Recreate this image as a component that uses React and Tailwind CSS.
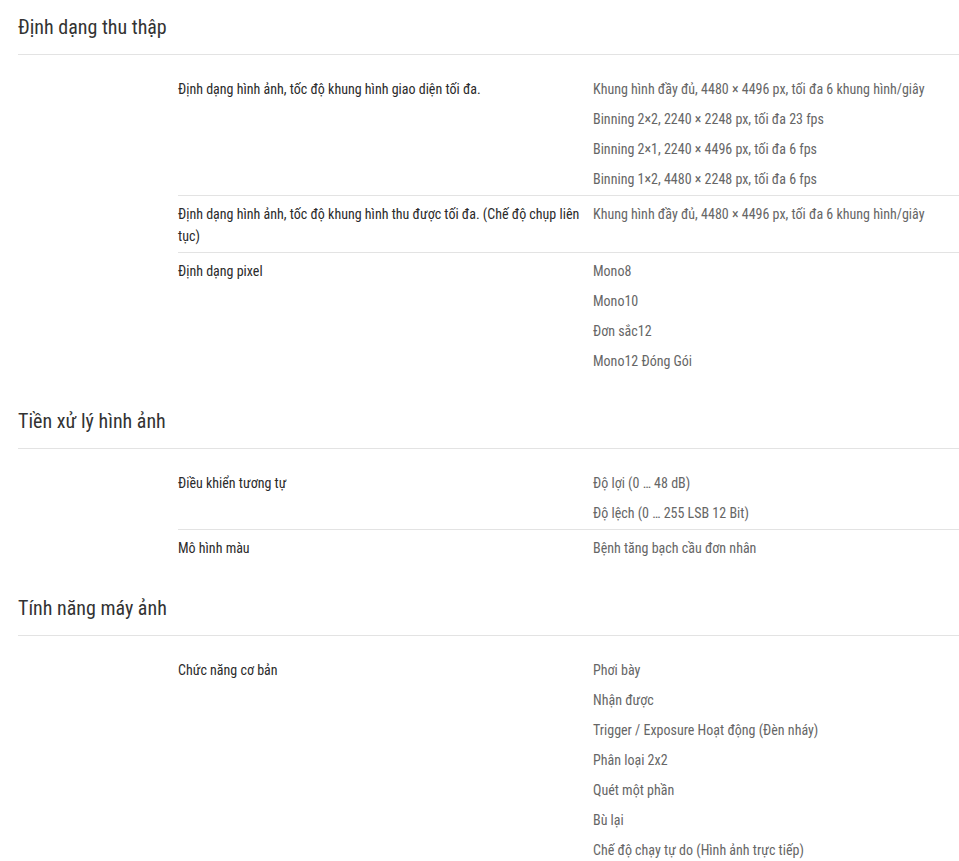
const sections = [
  {
    title: 'Định dạng thu thập',
    rows: [
      {
        label: 'Định dạng hình ảnh, tốc độ khung hình giao diện tối đa.',
        values: [
          'Khung hình đầy đủ, 4480 × 4496 px, tối đa 6 khung hình/giây',
          'Binning 2×2, 2240 × 2248 px, tối đa 23 fps',
          'Binning 2×1, 2240 × 4496 px, tối đa 6 fps',
          'Binning 1×2, 4480 × 2248 px, tối đa 6 fps',
        ],
      },
      {
        label: 'Định dạng hình ảnh, tốc độ khung hình thu được tối đa. (Chế độ chụp liên tục)',
        values: ['Khung hình đầy đủ, 4480 × 4496 px, tối đa 6 khung hình/giây'],
      },
      {
        label: 'Định dạng pixel',
        values: ['Mono8', 'Mono10', 'Đơn sắc12', 'Mono12 Đóng Gói'],
      },
    ],
  },
  {
    title: 'Tiền xử lý hình ảnh',
    rows: [
      {
        label: 'Điều khiển tương tự',
        values: ['Độ lợi (0 … 48 dB)', 'Độ lệch (0 … 255 LSB 12 Bit)'],
      },
      {
        label: 'Mô hình màu',
        values: ['Bệnh tăng bạch cầu đơn nhân'],
      },
    ],
  },
  {
    title: 'Tính năng máy ảnh',
    rows: [
      {
        label: 'Chức năng cơ bản',
        values: [
          'Phơi bày',
          'Nhận được',
          'Trigger / Exposure Hoạt động (Đèn nháy)',
          'Phân loại 2x2',
          'Quét một phần',
          'Bù lại',
          'Chế độ chạy tự do (Hình ảnh trực tiếp)',
        ],
      },
    ],
  },
];

const SpecRow = ({ row }) => (
  <div className="grid grid-cols-[415px_1fr] border-t border-[#e3e3e3] first:border-t-0 pt-[7px] pb-[5px]">
    <div className="pr-3 text-[#2b2b2b] leading-[22px]">{row.label}</div>
    <div className="flex flex-col gap-2 text-[#666666] leading-[22px]">
      {row.values.map((v) => (
        <div key={v}>{v}</div>
      ))}
    </div>
  </div>
);

export default function App() {
  return (
    <div
      className="min-h-screen bg-white pl-[18px] text-[14px] [font-stretch:condensed]"
      style={{ fontFamily: "'Roboto Condensed', Roboto, 'Liberation Sans', sans-serif" }}
    >
      {sections.map((section, i) => (
        <div key={section.title} className={i > 0 ? 'mt-[17px]' : ''}>
          <h2 className="py-[15px] text-[20px] leading-6 text-[#333333] border-b border-[#e3e3e3]">
            {section.title}
          </h2>
          <div className="mt-4 ml-[160px]">
            {section.rows.map((row) => (
              <SpecRow key={row.label} row={row} />
            ))}
          </div>
        </div>
      ))}
    </div>
  );
}
